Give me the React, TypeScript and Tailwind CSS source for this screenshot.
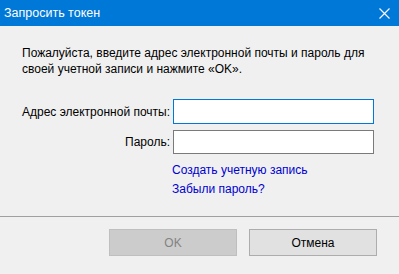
export default function App() {
  return (
    <div className="w-[399px] h-[274px] bg-[#f0f0f0] flex flex-col text-[12px] text-black font-['Liberation_Sans',Arial,sans-serif] overflow-hidden">
      {/* Title bar */}
      <div className="h-[26px] bg-[#0078d7] flex items-center justify-between pl-[4px] pr-[9px] text-white">
        <span className="text-[12.5px] leading-none">Запросить токен</span>
        <svg width="11" height="11" viewBox="0 0 11 11">
          <path d="M0.5 0.5 L10.5 10.5 M10.5 0.5 L0.5 10.5" stroke="white" strokeWidth="1.1" fill="none" />
        </svg>
      </div>

      {/* Body */}
      <div className="flex flex-col px-[22px] pt-[19px]">
        <p className="leading-[16px] whitespace-nowrap">
          Пожалуйста, введите адрес электронной почты и пароль для
          <br />
          своей учетной записи и нажмите «OK».
        </p>

        <div className="mt-[22px] grid grid-cols-[148px_201px] gap-x-[3px] gap-y-[6px] items-center">
          <label className="text-right whitespace-nowrap">Адрес электронной почты:</label>
          <div className="h-[25px] bg-white border border-[#0078d7]" />
          <label className="text-right">Пароль:</label>
          <div className="h-[24px] bg-white border border-[#7a7a7a]" />
        </div>

        <div className="ml-[150px] mt-[8px] flex flex-col gap-[3px] text-[#0000d0] leading-[16px]">
          <span>Создать учетную запись</span>
          <span>Забыли пароль?</span>
        </div>
      </div>

      <div className="mt-auto border-t border-[#a0a0a0]" />
      <div className="h-[57px] flex justify-end items-start pt-[12px] pr-[22px] gap-[12px]">
        <button className="w-[128px] h-[27px] bg-[#cccccc] border border-[#bfbfbf] text-[#838383]">OK</button>
        <button className="w-[128px] h-[27px] bg-[#e1e1e1] border border-[#adadad] text-black">Отмена</button>
      </div>
    </div>
  );
}
